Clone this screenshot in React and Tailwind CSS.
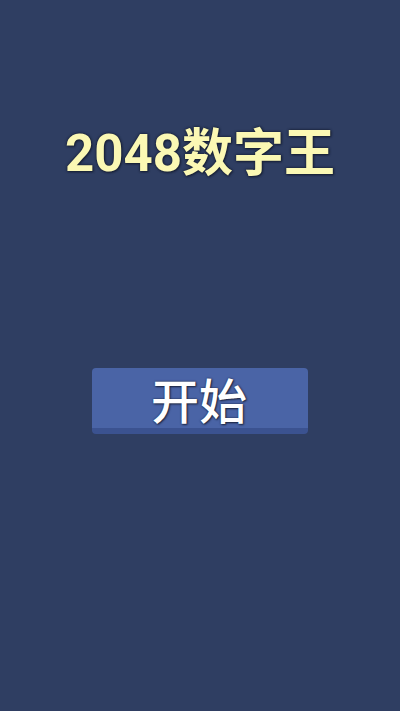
export default function App() {
  return (
    <div className="flex h-[711px] w-[400px] flex-col items-center bg-[#2f3e62]">
      <h1
        className="mt-[122px] text-[51px] font-bold leading-[64px] text-[#fbf8b4] [font-family:Roboto,'Noto_Sans_CJK_SC',sans-serif] [text-shadow:0_0_2px_#1a2238,0_0_3px_#1a2238,1px_1px_2px_#1a2238]"
      >
        2048数字王
      </h1>
      <button className="mt-[182px] flex h-[66px] w-[216px] items-center justify-center rounded-[4px] border-b-[6px] border-[#3b5290] bg-[#4a64a6] pr-[2px] text-[48px] font-medium leading-none text-white [font-family:'Noto_Sans_CJK_SC',sans-serif] [text-shadow:1px_1px_2px_#1c2540,0_0_2px_#1c2540]">
        开始
      </button>
    </div>
  );
}
